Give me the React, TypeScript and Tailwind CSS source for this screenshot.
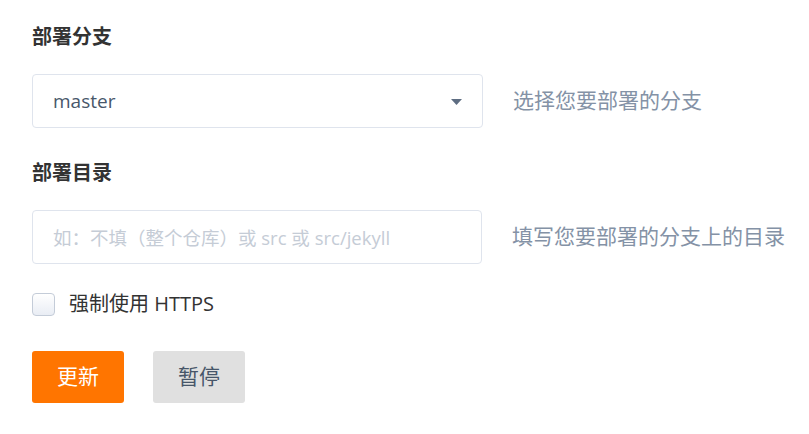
const font = "font-['Open_Sans','Noto_Sans_CJK_SC',sans-serif]";

const FieldRow = ({ children, help }: { children: React.ReactNode; help: string }) => (
  <div className="flex items-center">
    {children}
    <span className="ml-[30px] text-[21px] text-[#8492a6] whitespace-nowrap">{help}</span>
  </div>
);

export default function App() {
  return (
    <div className={`${font} bg-white w-[809px] h-[434px] pl-8 pt-[22px]`}>
      <h3 className="text-[20px] font-bold text-[#333] leading-[30px]">部署分支</h3>
      <div className="mt-[22px]">
        <FieldRow help="选择您要部署的分支">
          <div className="w-[451px] h-[54px] border border-[#dfe4ed] rounded-[4px] flex items-center justify-between pl-5 pr-5">
            <span className="text-[19px] text-[#48576a]">master</span>
            <svg width="11" height="6" viewBox="0 0 11 6" className="mt-[2px]">
              <path d="M0 0 H11 L5.5 6 Z" fill="#5e6d82" />
            </svg>
          </div>
        </FieldRow>
      </div>
      <h3 className="mt-[30px] text-[20px] font-bold text-[#333] leading-[30px]">部署目录</h3>
      <div className="mt-[22px]">
        <FieldRow help="填写您要部署的分支上的目录">
          <input
            className="w-[450px] h-[54px] border border-[#dfe4ed] rounded-[4px] pl-5 text-[18.5px] text-[#48576a] placeholder:text-[#c5ccd6] outline-none"
            placeholder="如：不填（整个仓库）或 src 或 src/jekyll"
          />
        </FieldRow>
      </div>
      <label className="mt-[25px] flex items-center">
        <span className="w-[23px] h-[23px] rounded-[4px] border border-[#c4ccd8] bg-gradient-to-b from-white to-[#e9edf4]" />
        <span className="ml-[14px] text-[20px] text-[#333]">强制使用 HTTPS</span>
      </label>
      <div className="mt-[32px] flex gap-[29px]">
        <button className="w-[92px] h-[52px] rounded-[3px] bg-[#ff7500] text-white text-[21px]">更新</button>
        <button className="w-[92px] h-[52px] rounded-[3px] bg-[#e0e0e0] text-[#475669] text-[21px]">暂停</button>
      </div>
    </div>
  );
}
